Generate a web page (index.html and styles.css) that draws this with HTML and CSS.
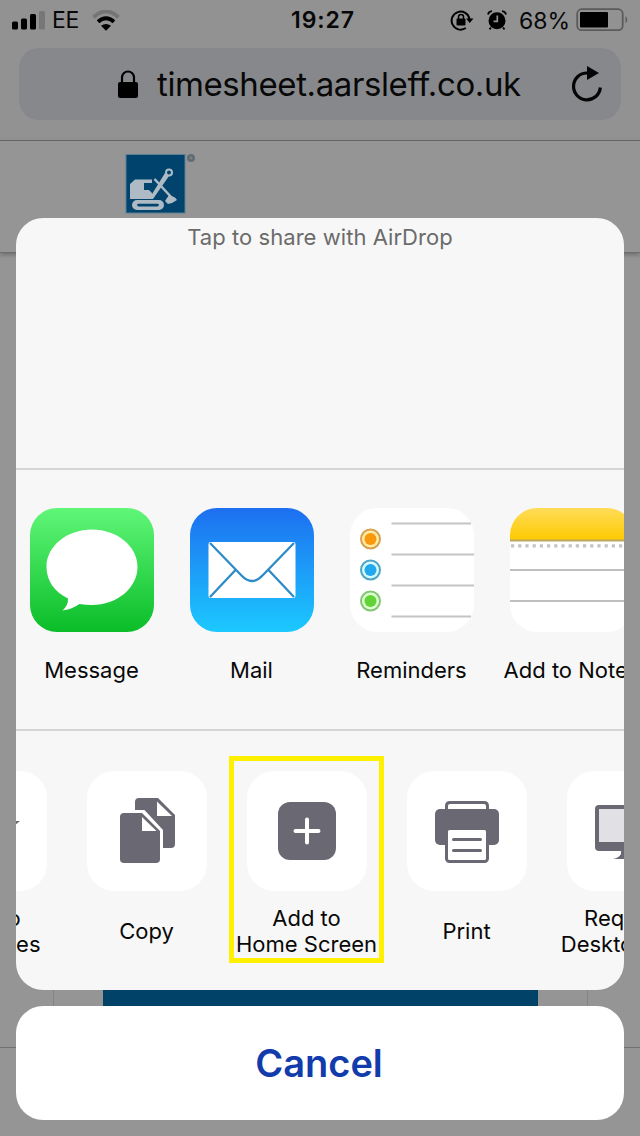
FILE: index.html
```html
<!DOCTYPE html>
<html lang="en">
<head>
<meta charset="utf-8">
<title>Share timesheet</title>
<link rel="stylesheet" href="styles.css">
</head>
<body>
<div class="phone">
  <header class="statusbar">
    <div class="status-left">
      <svg class="signal" width="34" height="20" viewBox="0 0 34 20"><rect x="0" y="11.5" width="6" height="8" rx="1.5"/><rect x="9" y="8.500" width="6" height="11" rx="1.5"/><rect x="18" y="4" width="6" height="15.500" rx="1.5"/><rect x="27" y="1" width="6" height="18.500" rx="1.500" fill="#777"/></svg>
      <span class="carrier">EE</span>
      <svg class="wifi" width="28" height="21" viewBox="0 0 28 21" fill="none"><path d="M1.500 7.200Q14-4.200 26.500 7.200" stroke="#757575" stroke-width="4"/><path d="M6 11.800Q14 4.800 22 11.800" stroke="#000" stroke-width="3.800"/><path d="M9 15.800Q14 12.200 19 15.800L14 20.700Z" fill="#000"/></svg>
    </div>
    <span class="clock">19:27</span>
    <div class="status-right">
      <svg width="24" height="22" viewBox="0 0 24 22"><path d="M15.800 19A9 9 0 1 1 19.500 10" fill="none" stroke="#000" stroke-width="2"/><path d="M16 9.500H23.500L19.700 14Z"/><rect x="6.500" y="9.500" width="9" height="7" rx="1"/><path d="M8.500 10V8a2.500 2.500 0 0 1 5 0v2" fill="none" stroke="#000" stroke-width="1.500"/></svg>
      <svg class="alarm" width="20" height="20" viewBox="0 0 20 20"><circle cx="10" cy="10.800" r="8.500"/><path d="M1 4.500Q1.500 1.500 5 1.200M19 4.500Q18.500 1.500 15 1.200M4 17.500L2.500 19.300M16 17.500L17.500 19.300" fill="none" stroke="#000" stroke-width="1.800"/><path d="M10.300 5.500V11.300H6.500" fill="none" stroke="#929292" stroke-width="1.700"/></svg>
      <span class="percent">68%</span>
      <svg class="battery" width="54" height="24" viewBox="0 0 54 24"><rect x="1.200" y="1.200" width="45.500" height="21" rx="4.500" fill="none" stroke="#5b5b5b" stroke-width="1.800"/><rect x="4" y="4" width="28" height="15.500" rx="1"/><path d="M49.500 8Q53 11.700 49.500 15.500Z" fill="#5b5b5b"/></svg>
    </div>
  </header>
  <div class="toolbar">
    <div class="address">
      <svg class="lock" width="22" height="29" viewBox="0 0 22 29"><rect x="1" y="12" width="20" height="16" rx="2"/><path d="M5 13V7.500a6 6 0 0 1 12 0V13" fill="none" stroke="#000" stroke-width="2.200"/></svg>
      <span class="url">timesheet.aarsleff.co.uk</span>
      <svg class="reload" width="32" height="37" viewBox="0 0 32 37"><path d="M16 7A13.400 13.400 0 1 0 29.300 21.500" fill="none" stroke="#050505" stroke-width="3.200"/><path d="M16 0L28 7L16 14Z" fill="#050505"/></svg>
    </div>
  </div>
  <div class="sitebar">
    <svg class="logo" width="72" height="62" viewBox="0 0 72 62">
      <rect x="0.500" y="1" width="60" height="59.500" fill="#5b7f95"/><rect x="1.500" y="2" width="58" height="57.500" fill="#00446e"/>
      <g fill="#aebbc4"><path d="M5 31L10 26.500H27V30H19V37H24L27 40V46H5Z"/><path fill-rule="evenodd" d="M12 47H34a4.500 4.500 0 0 1 0 10H12a4.500 4.500 0 0 1 0-10Zm1.500 3.700a1.400 1.400 0 0 0 0 2.800H32.500a1.400 1.400 0 0 0 0-2.800Z"/><path d="M24 46L40 20L44 23L28 46ZM40 48L44 42L50 44.500L52 47L47 50L43 51Z"/></g>
      <circle cx="44" cy="19.500" r="3" fill="none" stroke="#aebbc4" stroke-width="2"/><path d="M29.500 26L47 45" fill="none" stroke="#aebbc4" stroke-width="2.500"/>
      <circle cx="66" cy="5" r="4" fill="#5f6c74"/><circle cx="66" cy="5" r="1.400" fill="#7b8083"/>
    </svg>
  </div>
  <main class="webpage"><div class="card"><div class="banner"></div></div></main>
  <footer class="browser-footer"></footer>

  <div class="overlay">
    <section class="sheet">
      <div class="airdrop">Tap to share with AirDrop</div>
      <div class="apps">
        <div class="app">
          <svg width="124" height="124" viewBox="0 0 124 124"><defs><linearGradient id="green" x2="0" y2="1"><stop stop-color="#60f678"/><stop offset="1" stop-color="#0abd28"/></linearGradient></defs><rect width="124" height="124" rx="27" fill="url(#green)"/><path d="M62 21.500C87 21.500 107.500 38 107.500 59C107.500 80 87 97 62 97Q55.500 97 49.500 96C44 99.500 38 102 32.500 102.500Q38.500 97 38 90.500C24.500 84 16.500 72.500 16.500 59C16.500 38 37 21.500 62 21.500Z" fill="#fff"/></svg>
          <span class="name">Message</span>
        </div>
        <div class="app">
          <svg width="124" height="124" viewBox="0 0 124 124"><defs><linearGradient id="blue" x2="0" y2="1"><stop stop-color="#1d6ff0"/><stop offset="1" stop-color="#1cc9ff"/></linearGradient></defs><rect width="124" height="124" rx="27" fill="url(#blue)"/><rect x="18.500" y="34" width="87" height="56" rx="2" fill="#fff"/><path d="M20 35L51 67Q62 79 73 67L104 35M20 89L45.500 62M104 89L78.500 62" fill="none" stroke="#2d8bc9" stroke-width="2.300"/></svg>
          <span class="name">Mail</span>
        </div>
        <div class="app">
          <svg width="124" height="124" viewBox="0 0 124 124"><rect width="124" height="124" rx="27" fill="#fff"/><path d="M41.500 15.500H121M41.500 46.500H124M41.500 77.500H124M41.500 108.500H121" stroke="#c4c4c4" stroke-width="2"/><g fill="#ffeaa0" stroke="#d6a153" stroke-width="2"><circle cx="20.500" cy="31" r="9.500"/><circle cx="20.500" cy="62" r="9.500" fill="#d4faff" stroke="#4fa4c2"/><circle cx="20.500" cy="93" r="9.500" fill="#dcffcf" stroke="#84c477"/></g><circle cx="20.500" cy="31" r="6" fill="#f8980d"/><circle cx="20.500" cy="62" r="6" fill="#22a8ed"/><circle cx="20.500" cy="93" r="6" fill="#62d337"/></svg>
          <span class="name">Reminders</span>
        </div>
        <div class="app">
          <svg width="124" height="124" viewBox="0 0 124 124"><defs><linearGradient id="yellow" x2="0" y2="1"><stop stop-color="#ffdc59"/><stop offset="1" stop-color="#fdca00"/></linearGradient><clipPath id="note"><rect width="124" height="124" rx="27"/></clipPath></defs><g clip-path="url(#note)"><rect width="124" height="124" fill="#fff"/><rect width="124" height="32" fill="url(#yellow)"/><path d="M0 32.500H124" stroke="#bba762" stroke-width="2"/><path d="M1 37.800H124" stroke="#c4c4c4" stroke-width="3.200" stroke-dasharray="3.200 4"/><path d="M0 62H124M0 93H124" stroke="#bfbfbf" stroke-width="2"/></g></svg>
          <span class="name">Add to Notes</span>
        </div>
      </div>
      <div class="actions">
        <div class="action">
          <div class="tile"><svg width="120" height="120" viewBox="0 0 120 120" fill="#696873"><path d="M60 28L68 50H93L73 66L80 87L60 74L40 87L47 66L27 50H52Z"/></svg></div>
          <div class="caption"><span>Add to</span><span>Favourites</span></div>
        </div>
        <div class="action">
          <div class="tile"><svg width="120" height="120" viewBox="0 0 120 120" fill="#696873"><path d="M48 39V31Q48 27 52 27H71L88 44V73Q88 77 84 77H76V59L57.500 39Z"/><path d="M70 30.500V45H85Z" fill="#fff"/><path d="M37 42H55L73 60V88Q73 92 69 92H37Q33 92 33 88V46Q33 42 37 42Z"/><path d="M55 46V60H69.500Z" fill="#fff"/></svg></div>
          <div class="caption"><span>Copy</span></div>
        </div>
        <div class="action">
          <div class="tile"><svg width="120" height="120" viewBox="0 0 120 120"><rect x="31" y="31" width="58" height="58" rx="12" fill="#696873"/><path d="M48.500 60H71.500M60 48.500V71.500" stroke="#fff" stroke-width="4" stroke-linecap="round"/></svg></div>
          <div class="caption"><span>Add to</span><span>Home Screen</span></div>
          <div class="highlight"></div>
        </div>
        <div class="action">
          <div class="tile"><svg width="120" height="120" viewBox="0 0 120 120" fill="#696873"><path d="M39.500 43V35Q39.500 31.500 43 31.500H77Q80.500 31.500 80.500 35V43" fill="none" stroke="#696873" stroke-width="3"/><rect x="28" y="38" width="64" height="36" rx="5"/><rect x="39.500" y="57.500" width="41" height="33" rx="3" fill="#fff" stroke="#696873" stroke-width="3"/><path d="M46.500 68.500H73.500M46.500 79.500H73.500" stroke="#696873" stroke-width="3" stroke-linecap="round"/></svg></div>
          <div class="caption"><span>Print</span></div>
        </div>
        <div class="action">
          <div class="tile"><svg width="120" height="120" viewBox="0 0 120 120" fill="#696873"><rect x="28" y="34" width="64" height="46" rx="4"/><rect x="32" y="38" width="56" height="33" fill="#e1e0e5"/><path d="M54 80H66V83Q68 87 74 88H46Q52 87 54 83Z"/></svg></div>
          <div class="caption"><span>Request</span><span>Desktop Site</span></div>
        </div>
      </div>
    </section>
    <button class="cancel">Cancel</button>
  </div>
</div>
</body>
</html>
```
FILE: styles.css
```css
* { box-sizing: border-box; }
body { margin: 0; font-family: Inter, "Liberation Sans", sans-serif; color: #080808; }
svg { display: block; flex: none; }
.phone { position: relative; width: 640px; height: 1136px; overflow: hidden; background: #959595; display: flex; flex-direction: column; }
.statusbar { height: 48px; padding: 0 10px 8px 12px; display: grid; grid-template-columns: 1fr auto 1fr; align-items: center; font-size: 22px; background: #929292; }
.status-left, .status-right { display: flex; align-items: center; }
.status-right { justify-content: flex-end; }
.carrier { margin-left: 6px; font-size: 23px; letter-spacing: -0.3px; }
.wifi { margin-left: 13px; }
.clock { padding-left: 4px; font-size: 23px; font-weight: 600; letter-spacing: 0.9px; }
.alarm { margin-left: 13px; }
.percent { width: 51px; margin: 1px 6px 0 12px; font-size: 23px; }
.toolbar { height: 93px; padding: 0 19px; background: #929292; border-bottom: 1px solid #626262; }
.address { height: 72px; display: flex; align-items: center; padding-left: 98px; border-radius: 20px; background: #87888c; }
.url { width: 364px; margin-left: 18px; font-size: 33px; letter-spacing: -0.4px; white-space: nowrap; }
.reload { margin-left: 50px; }
.sitebar { height: 112px; flex: none; padding: 12px 0 0 125px; border-bottom: 1px solid #6d6d6d; box-shadow: 0 2px 4px #707070; background: #959595; }
.webpage { height: 795px; flex: none; padding: 0 52px 0 53px; border-bottom: 1px solid #707070; }
.card { height: 794px; padding: 700px 49px 0; border: solid #848484; border-width: 0 1px; }
.banner { height: 80px; background: #004268; }
.browser-footer { flex: 1; }
.overlay { position: absolute; inset: 0; padding: 218px 16px 16px; display: flex; flex-direction: column; gap: 16px; }
.sheet { height: 772px; overflow: hidden; border-radius: 27px; background: #f7f7f7; }
.airdrop { height: 252px; padding-top: 6px; border-bottom: 2px solid #d4d5d6; text-align: center; font-size: 22px; line-height: 27px; color: #6b6b6b; letter-spacing: 0.05px; }
.apps { height: 261px; display: flex; gap: 36px; padding: 38px 0 0 14px; border-bottom: 2px solid #d4d5d6; }
.app { width: 124px; flex: none; display: flex; flex-direction: column; align-items: center; gap: 25px; }
.name { margin-right: 1px; font-size: 22px; line-height: 27px; white-space: nowrap; }
.actions { display: flex; margin-left: -109px; width: 800px; }
.action { position: relative; width: 160px; flex: none; display: flex; flex-direction: column; align-items: center; padding-top: 40px; }
.tile { width: 120px; height: 120px; border-radius: 27px; background: #fff; }
.caption { height: 52px; margin: 14px 1px 0 0; display: flex; flex-direction: column; justify-content: center; align-items: center; font-size: 22px; line-height: 26px; white-space: nowrap; }
.highlight { position: absolute; left: 2px; top: 25px; width: 155px; height: 207px; border: 5px solid #fff000; }
.cancel { height: 114px; padding: 0 2px 0 0; border: 0; border-radius: 27px; background: #fff; font: 600 38px Inter, "Liberation Sans", sans-serif; color: #123cab; }
```
